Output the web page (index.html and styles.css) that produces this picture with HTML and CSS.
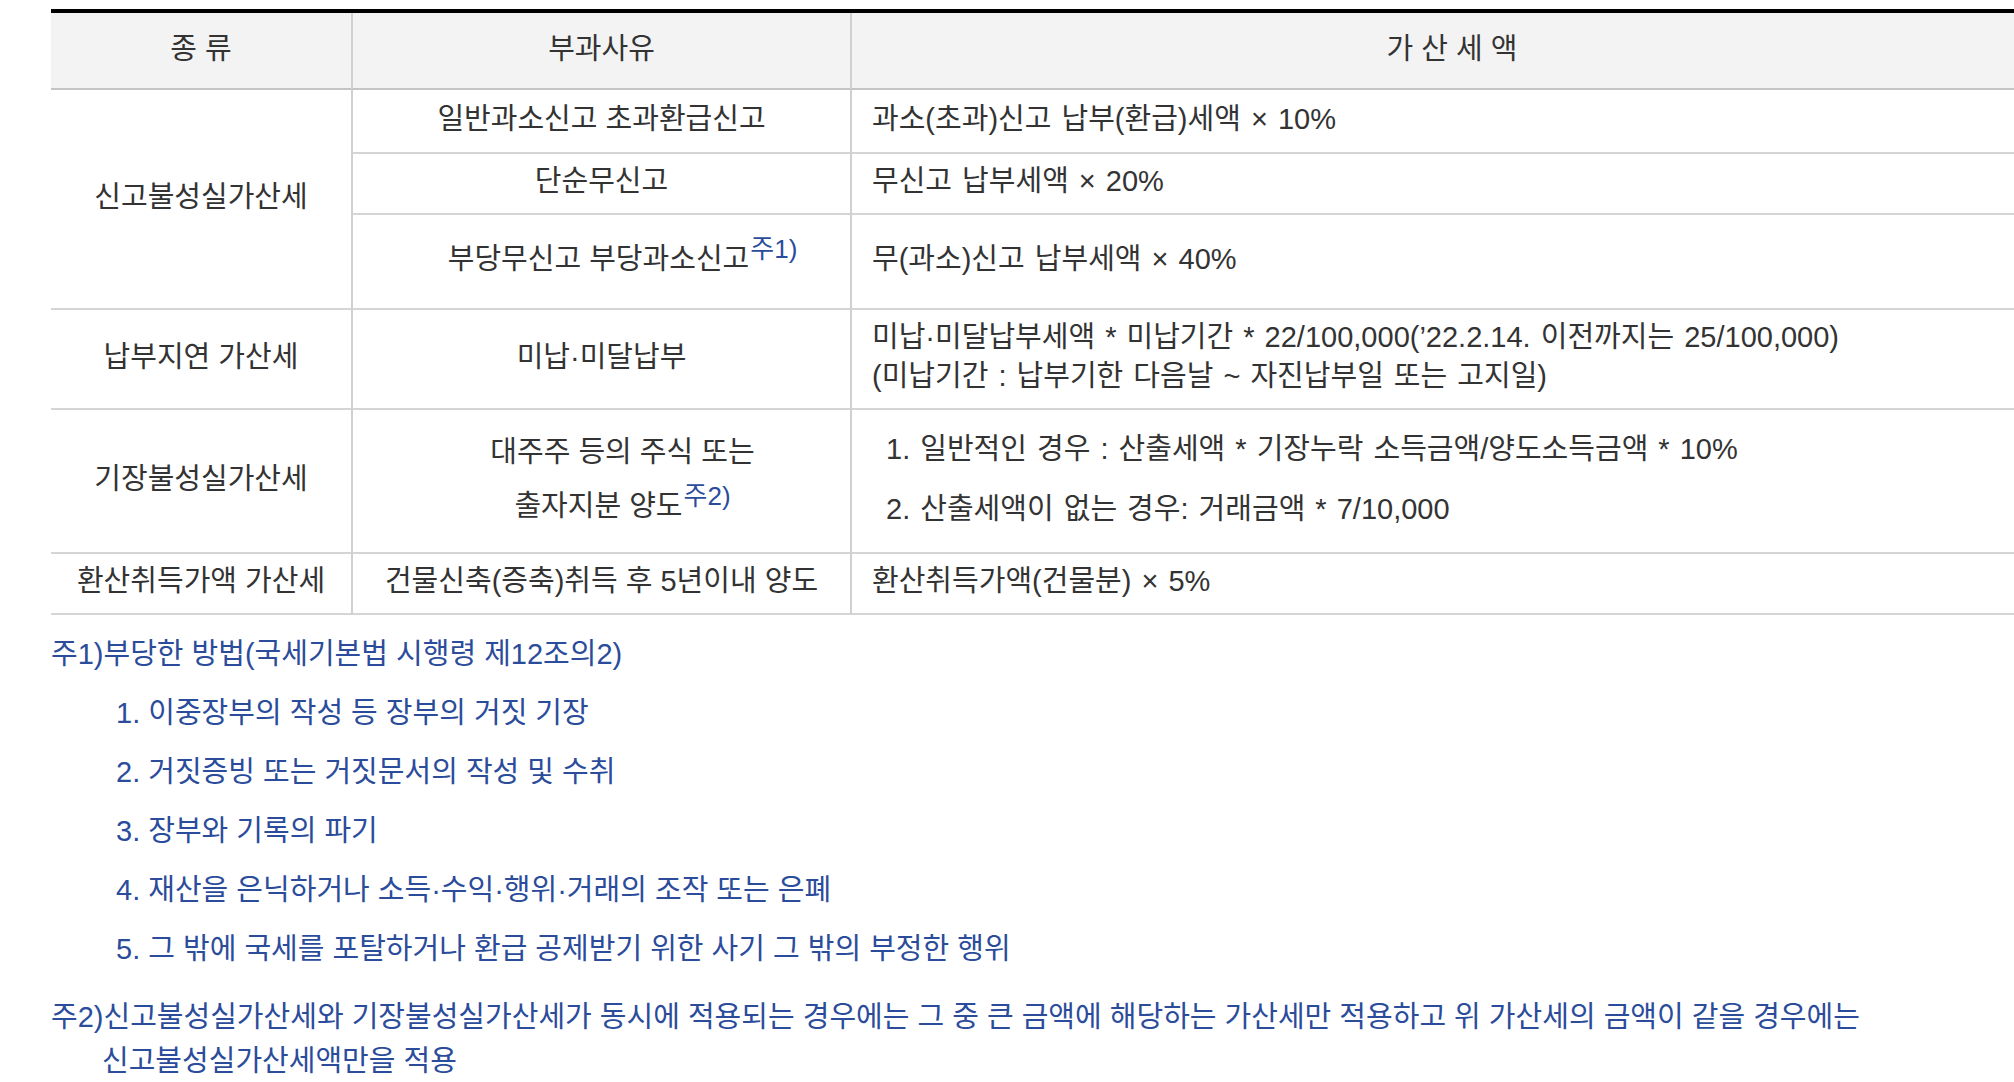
FILE: index.html
```html
<!DOCTYPE html>
<html lang="ko">
<head>
<meta charset="utf-8">
<title>가산세</title>
<link rel="stylesheet" href="styles.css">
</head>
<body>
<div class="page">
  <table class="tax">
    <colgroup>
      <col class="w-kind">
      <col class="w-reason">
      <col>
    </colgroup>
    <thead>
      <tr class="rh">
        <th class="kind">종 류</th>
        <th class="reason">부과사유</th>
        <th class="amount">가 산 세 액</th>
      </tr>
    </thead>
    <tbody>
      <tr class="r1">
        <td class="kind" rowspan="3">신고불성실가산세</td>
        <td class="reason">일반과소신고 초과환급신고</td>
        <td class="amount">과소(초과)신고 납부(환급)세액 × 10%</td>
      </tr>
      <tr class="r2">
        <td class="reason">단순무신고</td>
        <td class="amount">무신고 납부세액 × 20%</td>
      </tr>
      <tr class="r3">
        <td class="reason shift">부당무신고 부당과소신고<sup class="fn">주1)</sup></td>
        <td class="amount">무(과소)신고 납부세액 × 40%</td>
      </tr>
      <tr class="r4">
        <td class="kind">납부지연 가산세</td>
        <td class="reason">미납·미달납부</td>
        <td class="amount lines">미납·미달납부세액 * 미납기간 * 22/100,000(’22.2.14. 이전까지는 25/100,000)<br>(미납기간 : 납부기한 다음날 ~ 자진납부일 또는 고지일)</td>
      </tr>
      <tr class="r5">
        <td class="kind">기장불성실가산세</td>
        <td class="reason tall shift">대주주 등의 주식 또는<br>출자지분 양도<sup class="fn">주2)</sup></td>
        <td class="amount">
          <ol class="calc">
            <li>1. 일반적인 경우 : 산출세액 * 기장누락 소득금액/양도소득금액 * 10%</li>
            <li>2. 산출세액이 없는 경우: 거래금액 * 7/10,000</li>
          </ol>
        </td>
      </tr>
      <tr class="r6">
        <td class="kind">환산취득가액 가산세</td>
        <td class="reason">건물신축(증축)취득 후 5년이내 양도</td>
        <td class="amount">환산취득가액(건물분) × 5%</td>
      </tr>
    </tbody>
  </table>

  <div class="notes">
    <p class="note">주1)부당한 방법(국세기본법 시행령 제12조의2)</p>
    <ol class="note-list">
      <li>1. 이중장부의 작성 등 장부의 거짓 기장</li>
      <li>2. 거짓증빙 또는 거짓문서의 작성 및 수취</li>
      <li>3. 장부와 기록의 파기</li>
      <li>4. 재산을 은닉하거나 소득·수익·행위·거래의 조작 또는 은폐</li>
      <li>5. 그 밖에 국세를 포탈하거나 환급 공제받기 위한 사기 그 밖의 부정한 행위</li>
    </ol>
    <p class="note hang">주2)신고불성실가산세와 기장불성실가산세가 동시에 적용되는 경우에는 그 중 큰 금액에 해당하는 가산세만 적용하고 위 가산세의 금액이 같을 경우에는 신고불성실가산세액만을 적용</p>
  </div>
</div>
</body>
</html>
```

FILE: styles.css
```css
* {
  box-sizing: border-box;
}

html,
body {
  overflow: hidden;
}

body {
  margin: 0;
  background: #fff;
  font-family: "Liberation Sans", "Noto Sans CJK KR", sans-serif;
  color: #333;
  word-break: keep-all;
}

.page {
  padding: 9px 0 0 51px;
  overflow: hidden;
}

.tax {
  width: 2001px;
  table-layout: fixed;
  border-collapse: separate;
  border-spacing: 0;
  border-top: 4px solid #000;
}

.w-kind { width: 300px; }
.w-reason { width: 499px; }

.tax th,
.tax td {
  font-size: 29px;
  font-weight: 400;
  line-height: 39px;
  text-align: center;
  vertical-align: middle;
  padding: 0 20px 4px;
  border-bottom: 2px solid #d5d5d5;
}

.tax th {
  background: #f3f3f3;
  border-bottom-color: #c4c4c4;
  padding-bottom: 2px;
}

.tax .reason,
.tax .amount {
  border-left: 2px solid #d0d0d0;
}

.tax td.amount {
  text-align: left;
  word-spacing: 2px;
}

.tax td.shift {
  padding-left: 62px;
}

.rh { height: 77px; }
.r1 { height: 64px; }
.r2 { height: 61px; }
.r3 { height: 95px; }
.r4 { height: 100px; }
.r5 { height: 144px; }
.r6 { height: 61px; }

.fn {
  font-size: 26px;
  line-height: 0;
  color: #2b4c9b;
  vertical-align: 11px;
  margin-left: 1px;
}

.tall {
  line-height: 54px !important;
}

.calc {
  list-style: none;
  margin: 0;
  padding: 0 0 0 14px;
}

.calc li {
  line-height: 60px;
}

.notes {
  color: #2b4c9b;
  font-size: 29px;
}

.note {
  margin: 10px 0 0;
  line-height: 59px;
}

.note-list {
  list-style: none;
  margin: 0;
  padding: 0 0 0 65px;
}

.note-list li {
  line-height: 59px;
}

.note.hang {
  margin-top: 16px;
  line-height: 44px;
  padding-left: 51px;
  text-indent: -51px;
}
```
